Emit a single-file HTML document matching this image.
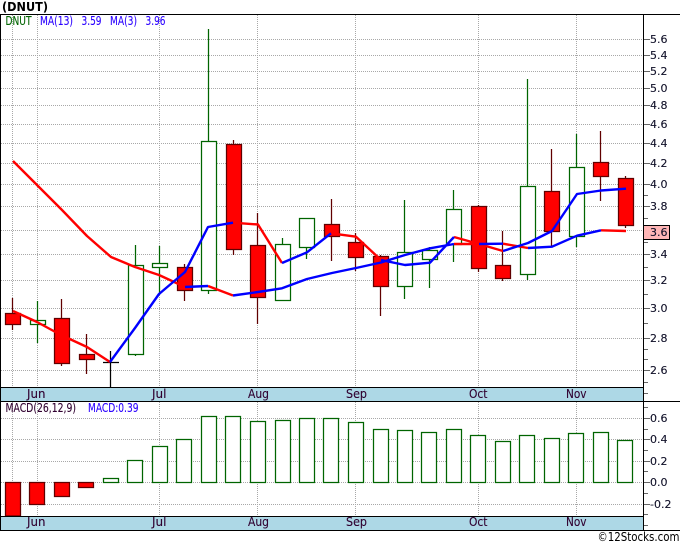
<!DOCTYPE html>
<html><head><meta charset="utf-8"><style>
html,body{margin:0;padding:0;background:#fff;width:680px;height:546px;overflow:hidden}
svg{display:block}
text{font-family:"DejaVu Sans","Liberation Sans",sans-serif;font-size:11px;fill:#101028;stroke:#101028;stroke-width:.12px}
text.l{font-size:12px}
text.b{fill:#2a00ff;stroke:#2a00ff}
text.p{fill:#300030;stroke:#300030}
</style></head><body>
<svg width="680" height="546" viewBox="0 0 680 546" xmlns="http://www.w3.org/2000/svg">
<rect x="1" y="388" width="642" height="13" fill="#ADD8E6"/>
<rect x="1" y="517" width="642" height="13" fill="#ADD8E6"/>
<g stroke="#a8a8a8" stroke-width="1" stroke-dasharray="1 1" fill="none" shape-rendering="crispEdges">
<path d="M1 39.5H643M1 55.5H643M1 71.5H643M1 88.5H643M1 105.5H643M1 124.5H643M1 143.5H643M1 163.5H643M1 184.5H643M1 206.5H643M1 230.5H643M1 254.5H643M1 280.5H643M1 308.5H643M1 338.5H643M1 370.5H643"/>
<path d="M1 418.5H643M1 439.5H643M1 461.5H643M1 482.5H643M1 504.5H643"/>
<path d="M12.5 15V387M37.5 15V387M159.5 15V387M257.5 15V387M355.5 15V387M478.5 15V387M576.5 15V387"/>
<path d="M12.5 402V516M37.5 402V516M159.5 402V516M257.5 402V516M355.5 402V516M478.5 402V516M576.5 402V516"/>
</g>
<g stroke="#006400" fill="none" stroke-width="1.25">
<path d="M37.5 301V343M135.5 245V356M159.5 246V295M208.5 29V294M282.5 238V245M306.5 247V259M404.5 200V299M429.5 247V288M453.5 190V262M527.5 79V280M576.5 134V247"/>
</g>
<g fill="#fff" stroke="#006400" stroke-width="1.25">
<rect x="30.5" y="320.5" width="15" height="4"/>
<rect x="128.5" y="265.5" width="15" height="89"/>
<rect x="152.5" y="263.5" width="15" height="4"/>
<rect x="201.5" y="141.5" width="15" height="149"/>
<rect x="275.5" y="244.5" width="15" height="56"/>
<rect x="299.5" y="218.5" width="15" height="29"/>
<rect x="397.5" y="252.5" width="15" height="34"/>
<rect x="422.5" y="250.5" width="15" height="9"/>
<rect x="446.5" y="209.5" width="15" height="35"/>
<rect x="520.5" y="186.5" width="15" height="88"/>
<rect x="569.5" y="167.5" width="15" height="69"/>
</g>
<g stroke="#600000" fill="none" stroke-width="1.25">
<path d="M12.5 298V330M61.5 299V366M86.5 334V374M184.5 264V301M233.5 140V255M257.5 213V324M331.5 199V261M355.5 233V271M380.5 255V316M478.5 205V272M502.5 231V281M551.5 149V247M600.5 131V201M625.5 176V228"/>
</g>
<g fill="#f00" stroke="#600000" stroke-width="1.25">
<rect x="5.5" y="313.5" width="15" height="11"/>
<rect x="54.5" y="318.5" width="15" height="45"/>
<rect x="79.5" y="354.5" width="15" height="5"/>
<rect x="177.5" y="267.5" width="15" height="23"/>
<rect x="226.5" y="144.5" width="15" height="105"/>
<rect x="250.5" y="245.5" width="15" height="52"/>
<rect x="324.5" y="224.5" width="15" height="12"/>
<rect x="348.5" y="242.5" width="15" height="15"/>
<rect x="373.5" y="256.5" width="15" height="30"/>
<rect x="471.5" y="206.5" width="15" height="62"/>
<rect x="495.5" y="265.5" width="15" height="13"/>
<rect x="544.5" y="191.5" width="15" height="40"/>
<rect x="593.5" y="162.5" width="15" height="14"/>
<rect x="618.5" y="178.5" width="15" height="47"/>
</g>
<path d="M103 362.5H119M110.5 351V387" stroke="#000" stroke-width="1.25" fill="none"/>
<g fill="none" stroke-width="2.4" stroke-linejoin="round">
<path stroke="#f00" d="M13 161L38 186L62 210L87 236L111 257L135 267L159 275L185 287M208 286L233 295.5M13 311L37 322L61 335L87 347L110 362M233 222.7L258 224.5L282 263M331 233.3L356 236.7L381 260M454 244L479 244M454 237L479 244L503 251M503 243.7L528 248M601 230.3L626 231"/>
<path stroke="#00f" d="M110 362L135 328L159 294L185 272L208 227L233 222.7M185 287L208 286M233 295.5L258 292L282 288.3L307 279L332 273L356 268L381 262.5L405 255L430 248.3L454 244M282 263L307 252.3L331 233.3M381 260L405 265L430 262.7L454 237M479 244L503 243.7M503 251L528 243L552 231L577 194L601 190.5L626 188.7M528 248L552 246.7L577 235.7L601 230.3"/>
</g>
<g fill="#fff" stroke="#006400" stroke-width="1.25">
<rect x="103.5" y="478.5" width="15" height="4"/>
<rect x="127.5" y="460.5" width="15" height="22"/>
<rect x="152.5" y="446.5" width="15" height="36"/>
<rect x="176.5" y="439.5" width="15" height="43"/>
<rect x="201.5" y="416.5" width="15" height="66"/>
<rect x="225.5" y="416.5" width="15" height="66"/>
<rect x="250.5" y="421.5" width="15" height="61"/>
<rect x="275.5" y="420.5" width="15" height="62"/>
<rect x="299.5" y="418.5" width="15" height="64"/>
<rect x="323.5" y="418.5" width="15" height="64"/>
<rect x="348.5" y="422.5" width="15" height="60"/>
<rect x="373.5" y="429.5" width="15" height="53"/>
<rect x="397.5" y="430.5" width="15" height="52"/>
<rect x="421.5" y="432.5" width="15" height="50"/>
<rect x="446.5" y="429.5" width="15" height="53"/>
<rect x="470.5" y="435.5" width="15" height="47"/>
<rect x="495.5" y="441.5" width="15" height="41"/>
<rect x="519.5" y="435.5" width="15" height="47"/>
<rect x="544.5" y="438.5" width="15" height="44"/>
<rect x="568.5" y="433.5" width="15" height="49"/>
<rect x="593.5" y="432.5" width="15" height="50"/>
<rect x="617.5" y="440.5" width="15" height="42"/>
</g>
<g fill="#f00" stroke="#600000" stroke-width="1.25">
<rect x="5.5" y="482.5" width="15" height="33.5"/>
<rect x="29.5" y="482.5" width="15" height="22"/>
<rect x="54.5" y="482.5" width="15" height="14"/>
<rect x="78.5" y="482.5" width="15" height="5"/>
</g>
<g stroke="#666" fill="none" shape-rendering="crispEdges">
<path d="M643 39.5H650M643 55.5H650M643 71.5H650M643 88.5H650M643 105.5H650M643 124.5H650M643 143.5H650M643 163.5H650M643 184.5H650M643 206.5H650M643 254.5H650M643 280.5H650M643 308.5H650M643 338.5H650M643 370.5H650"/>
<path d="M643 418.5H650M643 439.5H650M643 461.5H650M643 482.5H650M643 504.5H650"/>
<path d="M643 195.5H648M643 218.5H648M643 242.5H648M643 267.5H648M643 294.5H648M643 323.5H648M643 349.5H648M643 359.5H648M643 382.5H648M643 393.5H648M643 407.5H648M643 429.5H648M643 450.5H648M643 471.5H648M643 493.5H648M643 514.5H648M643 525.5H648"/>
</g>
<g stroke="#000" fill="none" shape-rendering="crispEdges">
<path d="M0 14.5H680M0 401.5H680M0 530.5H680M1 387.5H643M1 516.5H643M0.5 14V531M643.5 14V531"/>
</g>
<rect x="643.5" y="225.5" width="26" height="14" fill="#FFB6B6" stroke="#000" shape-rendering="crispEdges"/>
<text x="2" y="11" textLength="46" lengthAdjust="spacingAndGlyphs" style="font-weight:bold;font-size:12px;fill:#000;stroke:none">(DNUT)</text>
<text class="l" x="5.5" y="25" textLength="26" lengthAdjust="spacingAndGlyphs" style="fill:#006400;stroke:#006400">DNUT</text>
<text class="l b" x="40" y="25" textLength="33" lengthAdjust="spacingAndGlyphs">MA(13)</text>
<text class="l b" x="81.5" y="25" textLength="20" lengthAdjust="spacingAndGlyphs">3.59</text>
<text class="l b" x="110" y="25" textLength="27" lengthAdjust="spacingAndGlyphs">MA(3)</text>
<text class="l b" x="145.5" y="25" textLength="20" lengthAdjust="spacingAndGlyphs">3.96</text>
<text class="l b" x="88" y="412" textLength="50.5" lengthAdjust="spacingAndGlyphs">MACD:0.39</text>
<text class="l p" x="5.5" y="412" textLength="70.5" lengthAdjust="spacingAndGlyphs">MACD(26,12,9)</text>
<text x="650" y="43">5.6</text><text x="650" y="59">5.4</text><text x="650" y="75">5.2</text><text x="650" y="92">5.0</text><text x="650" y="109">4.8</text><text x="650" y="128">4.6</text><text x="650" y="147">4.4</text><text x="650" y="167">4.2</text><text x="650" y="188">4.0</text><text x="650" y="210">3.8</text><text x="650" y="236">3.6</text><text x="650" y="258">3.4</text><text x="650" y="284">3.2</text><text x="650" y="312">3.0</text><text x="650" y="342">2.8</text><text x="650" y="374">2.6</text>
<text x="650" y="422">0.6</text><text x="650" y="443">0.4</text><text x="650" y="465">0.2</text><text x="650" y="486">0.0</text><text x="650" y="508">-0.2</text>
<text class="l p" x="27" y="398" textLength="18.5" lengthAdjust="spacingAndGlyphs">Jun</text><text class="l p" x="152" y="398" textLength="14.5" lengthAdjust="spacingAndGlyphs">Jul</text><text class="l p" x="248" y="398" textLength="21" lengthAdjust="spacingAndGlyphs">Aug</text><text class="l p" x="346" y="398" textLength="21" lengthAdjust="spacingAndGlyphs">Sep</text><text class="l p" x="469" y="398" textLength="18.5" lengthAdjust="spacingAndGlyphs">Oct</text><text class="l p" x="566" y="398" textLength="20.5" lengthAdjust="spacingAndGlyphs">Nov</text>
<text class="l p" x="27" y="526" textLength="18.5" lengthAdjust="spacingAndGlyphs">Jun</text><text class="l p" x="152" y="526" textLength="14.5" lengthAdjust="spacingAndGlyphs">Jul</text><text class="l p" x="248" y="526" textLength="21" lengthAdjust="spacingAndGlyphs">Aug</text><text class="l p" x="346" y="526" textLength="21" lengthAdjust="spacingAndGlyphs">Sep</text><text class="l p" x="469" y="526" textLength="18.5" lengthAdjust="spacingAndGlyphs">Oct</text><text class="l p" x="566" y="526" textLength="20.5" lengthAdjust="spacingAndGlyphs">Nov</text>
<text class="l" x="597.5" y="541" textLength="82" lengthAdjust="spacingAndGlyphs" style="fill:#000;stroke:none">©12Stocks.com</text>
</svg>
</body></html>
